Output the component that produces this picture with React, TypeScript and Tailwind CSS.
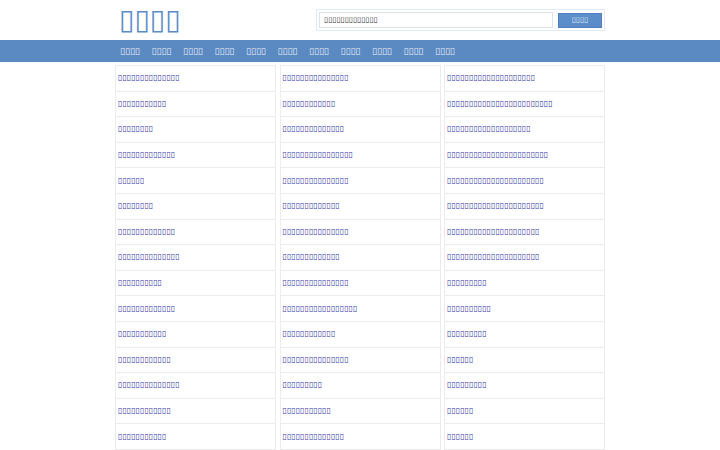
const T = (n: number) => "\u25AF".repeat(n);

const nav = [4, 4, 4, 4, 4, 4, 4, 4, 4, 4, 4];

const cols: number[][] = [
  [14, 11, 8, 13, 6, 8, 13, 14, 10, 13, 11, 12, 14, 12, 11],
  [15, 12, 14, 16, 15, 13, 15, 13, 15, 17, 12, 15, 9, 11, 14],
  [20, 24, 19, 23, 22, 22, 21, 21, 9, 10, 9, 6, 9, 6, 6],
];

export default function App() {
  return (
    <div className="w-[720px] h-[450px] overflow-hidden bg-white font-['DejaVu_Sans',sans-serif]">
      <header className="h-10 w-[490px] mx-auto flex items-center justify-between">
        <div className="pl-[4px] text-[28px] leading-none text-[#5a8cc6]">{T(4)}</div>
        <div className="flex items-center w-[289px] h-[22px] border border-[#e3ecf5] bg-[#fbfdff] px-[2px] gap-[5px]">
          <div className="flex-1 h-[16px] border border-[#dde3ea] bg-white flex items-center pl-[4px] text-[7.5px] text-[#333]">{T(13)}</div>
          <div className="w-[44px] h-[15px] bg-[#5b8dca] border border-[#4f80bd] flex items-center justify-center text-[7.5px] text-[#dfe9f5]">{T(4)}</div>
        </div>
      </header>
      <nav className="h-[22px] bg-[#5b89c2]">
        <div className="w-[490px] mx-auto h-full flex items-center pl-[5px] gap-[11.7px] text-[9px] text-[#e6eef8]">
          {nav.map((n, i) => (
            <span key={i} className="leading-none">{T(n)}</span>
          ))}
        </div>
      </nav>
      <main className="w-[490px] mx-auto mt-[3px] grid grid-cols-[161px_161px_161px] gap-x-[3.5px]">
        {cols.map((col, ci) => (
          <div key={ci} className="border-l border-r border-t border-[#ececec]">
            {col.map((n, ri) => (
              <div key={ri} className="h-[25.6px] border-b border-[#ececec] flex items-center pl-[2px] text-[8px] text-[#3a3aa2] leading-none">
                {T(n)}
              </div>
            ))}
          </div>
        ))}
      </main>
    </div>
  );
}
